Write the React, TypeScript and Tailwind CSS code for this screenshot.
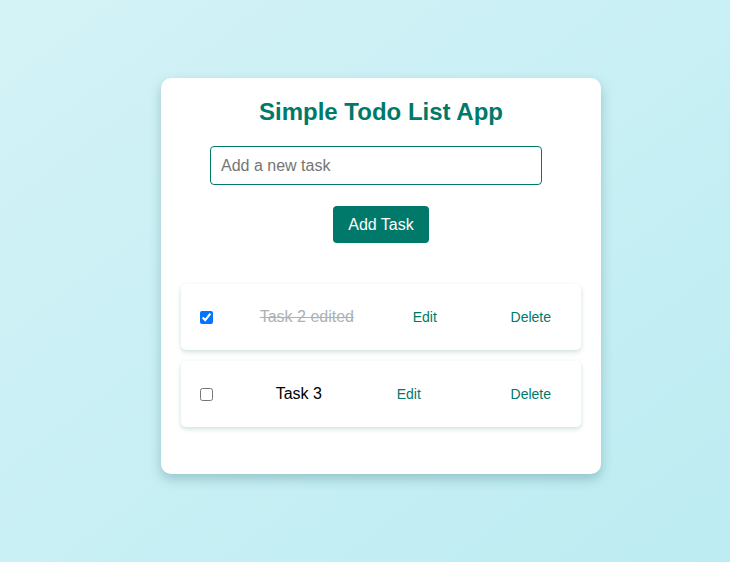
import React from "react";

export default function App() {
  const font = { fontFamily: '"Liberation Sans", Arial, sans-serif' };
  return (
    <div
      className="w-[730px] h-[562px] overflow-hidden bg-gradient-to-br from-[#d4f3f7] to-[#bcecf2] pt-[78px] pl-[161px]"
      style={font}
    >
      <div className="w-[440px] h-[396px] bg-white rounded-[10px] shadow-[0_5px_12px_rgba(0,70,80,0.25)] p-[20px] flex flex-col">
        <h2 className="text-[24px] leading-[28px] font-bold text-[#00796b] text-center">
          Simple Todo List App
        </h2>
        <input
          type="text"
          placeholder="Add a new task"
          className="mt-[20px] ml-[29px] w-[332px] h-[39px] border border-[#00796b] rounded-[4px] px-[10px] text-[16px] text-black placeholder:text-[#757575] outline-none"
          style={font}
        />
        <div className="flex justify-center mt-[21px]">
          <button
            className="w-[96px] h-[37px] bg-[#00796b] text-white text-[16px] rounded-[4px]"
            style={font}
          >
            Add Task
          </button>
        </div>
        <div className="mt-[41px] flex flex-col gap-[11px]">
          {[
            { text: "Task 2 edited", done: true },
            { text: "Task 3", done: false },
          ].map((t) => (
            <div
              key={t.text}
              className="h-[66px] bg-white rounded-[5px] shadow-[0_2px_5px_rgba(0,100,100,0.2)] px-[15px] flex items-center justify-between"
            >
              <input type="checkbox" defaultChecked={t.done} className="m-[3px_3px_3px_4px] w-[13px] h-[13px]" />
              <span
                className={
                  t.done
                    ? "text-[16px] text-[#a9b2b6] line-through"
                    : "text-[16px] text-black"
                }
              >
                {t.text}
              </span>
              <button className="px-[15px] py-[10px] text-[14px] text-[#00796b] bg-transparent" style={font}>
                Edit
              </button>
              <button className="px-[15px] py-[10px] text-[14px] text-[#00796b] bg-transparent" style={font}>
                Delete
              </button>
            </div>
          ))}
        </div>
      </div>
    </div>
  );
}
